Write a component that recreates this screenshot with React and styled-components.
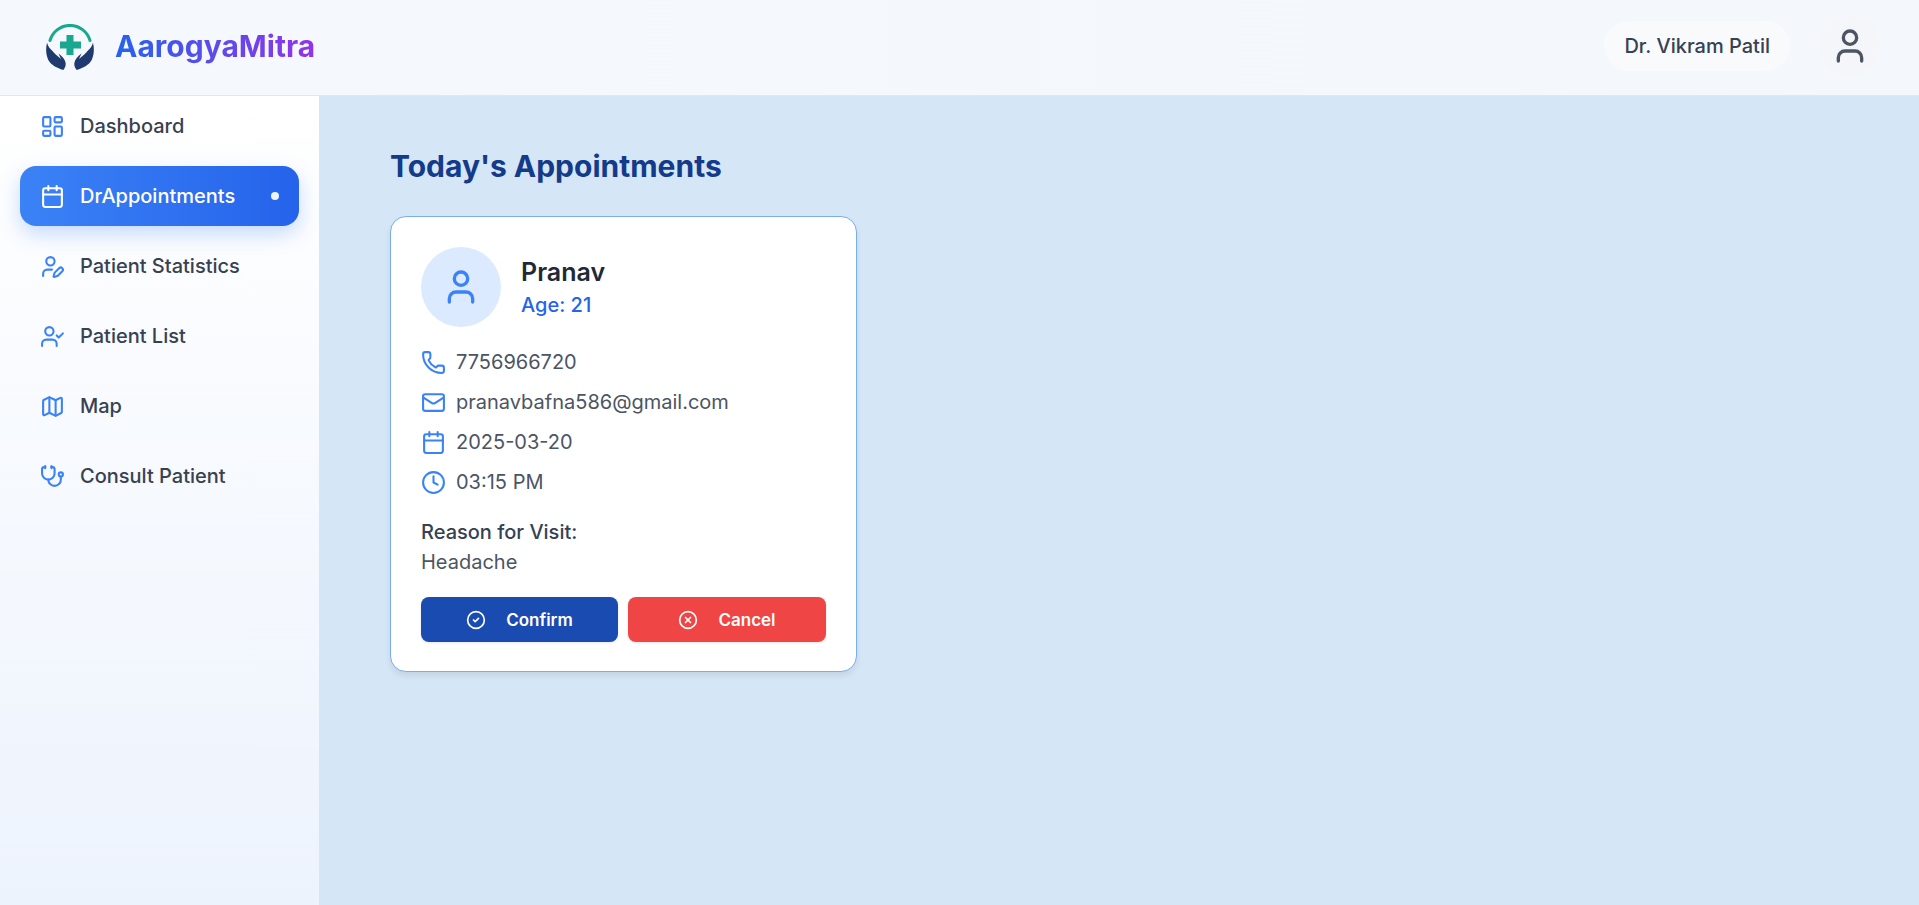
import React from "react";
import styled, { createGlobalStyle } from "styled-components";
import { LayoutDashboard, Calendar, UserPen, UserCheck, Map as MapIcon, Stethoscope, User, Phone, Mail, Clock, CircleCheck, CircleX } from "lucide-react";

const Global = createGlobalStyle`
  * { box-sizing: border-box; }
  html, body { margin: 0; height: 100%; }
  body { font-family: Inter, "Liberation Sans", sans-serif; background: #d5e6f6; }
`;
const Page = styled.div`display:flex;flex-direction:column;height:905px;overflow:hidden;`;
const Header = styled.header`
  height: 96px; flex: none; display:flex; align-items:center; justify-content:space-between;
  padding: 0 39px 3px 46px; background: linear-gradient(90deg,#f5f8fd,#f4f7fc); border-bottom: 1px solid #e1e7f0;
`;
const Brand = styled.div`display:flex;align-items:center;gap:21px;`;
const LogoMark = styled.svg`width:48px;height:47px;margin-top:3px;flex:none;`;
const BrandName = styled.span`
  font-size: 30px; font-weight: 700; line-height: 36px;
  background: linear-gradient(90deg,#2563eb,#9333ea); -webkit-background-clip:text; background-clip:text; color:transparent;
`;
const Profile = styled.div`display:flex;align-items:center;gap:30px;`;
const DoctorName = styled.div`
  height: 50px; padding: 0 20px; border-radius: 25px; background:#f9fafc; display:flex; align-items:center;
  font-size: 20px; font-weight: 500; color:#374151;
`;
const ProfileButton = styled.div`
  width: 60px; height: 60px; border-radius: 50%; background:#f5f6f9; display:flex; align-items:center; justify-content:center; color:#4b5563;
`;
const Body = styled.div`flex:1;display:flex;min-height:0;`;
const Sidebar = styled.aside`
  width: 319px; flex:none; padding: 0 20px; display:flex; flex-direction:column; gap:10px;
  background: linear-gradient(180deg,#ffffff,#edf3fd);
`;
const NavItem = styled.div`
  height: 60px; display:flex; align-items:center; gap:15px; padding: 0 20px; border-radius: 16px;
  font-size: 20px; font-weight: 500;
  color: ${p => p.$active ? "#fff" : "#374151"};
  background: ${p => p.$active ? "linear-gradient(90deg,#3b82f6,#2563eb)" : "transparent"};
  box-shadow: ${p => p.$active ? "0 8px 20px rgba(59,130,246,.28)" : "none"};
  svg { color: ${p => p.$active ? "#fff" : "#3b82f6"}; flex:none; }
`;
const Dot = styled.span`width:8px;height:8px;border-radius:50%;background:#eef4ff;margin-left:auto;`;
const Main = styled.main`flex:1;padding:52px 71px;background:#d5e6f6;`;
const Title = styled.h1`margin:0 0 32px;font-size:30px;line-height:36px;font-weight:700;color:#143a8a;`;
const Card = styled.section`
  width: 467px; height: 456px; padding: 30px; background:#fff; border:1px solid #76aeee; border-radius:16px;
  box-shadow: 0 4px 6px rgba(0,0,0,.08);
`;
const Person = styled.div`display:flex;align-items:center;gap:20px;margin-bottom:20px;`;
const Avatar = styled.div`width:80px;height:80px;border-radius:50%;background:#dbeafe;display:flex;align-items:center;justify-content:center;color:#3b82f6;`;
const PersonText = styled.div`display:flex;flex-direction:column;gap:3px;`;
const Name = styled.div`font-size:25px;line-height:32px;font-weight:600;color:#1f2937;`;
const Age = styled.div`font-size:20px;line-height:28px;font-weight:500;color:#2563eb;`;
const Details = styled.div`display:flex;flex-direction:column;gap:10px;`;
const Detail = styled.div`
  display:flex;align-items:center;gap:10px;height:30px;font-size:20px;color:#4b5563;
  svg { color:#3b82f6; flex:none; }
`;
const Reason = styled.div`margin-top:20px;`;
const ReasonLabel = styled.div`font-size:20px;line-height:30px;font-weight:500;color:#374151;`;
const ReasonText = styled.div`font-size:20px;line-height:30px;color:#4b5563;`;
const Actions = styled.div`display:grid;grid-template-columns:197px 198px;gap:10px;margin-top:20px;`;
const ActionButton = styled.button`
  height:45px;border:0;border-radius:8px;display:flex;align-items:center;justify-content:center;gap:20px;
  font-family:inherit;font-size:17px;font-weight:600;color:#fff;background:${p => p.$bg};
  box-shadow:0 1px 3px rgba(0,0,0,.1);padding:0;
`;

const hand = "M1 18.7C-.5 25 0 31 2.3 36 5 41 11 44 17.3 46 19.5 43 20 41 19.5 38.5 19 35.5 16.5 32.5 12.5 29.5L15 35C11.5 32 8 29 6.5 27 4 25 2 22 1 18.7Z";
const Logo = () => (
  <LogoMark viewBox="0 0 48 47" aria-hidden="true">
    <path d="M4 16.5A20.8 20.8 0 0 1 44 16.5" fill="none" stroke="#17a88f" strokeWidth="3" strokeLinecap="round"/>
    <path d="M20.5 11h7v6.5H35v7h-7.5V31h-7v-6.5H14v-7h6.5z" fill="#17a88f"/>
    <path d={hand} fill="#1e3a6e"/>
    <path d={hand} fill="#1e3a6e" transform="matrix(-1 0 0 1 48 0)"/>
  </LogoMark>
);

const items = [
  ["Dashboard", LayoutDashboard],
  ["DrAppointments", Calendar, true],
  ["Patient Statistics", UserPen],
  ["Patient List", UserCheck],
  ["Map", MapIcon],
  ["Consult Patient", Stethoscope],
];

export default function App() {
  return (
    <Page>
      <Global />
      <Header>
        <Brand><Logo /><BrandName>AarogyaMitra</BrandName></Brand>
        <Profile>
          <DoctorName>Dr. Vikram Patil</DoctorName>
          <ProfileButton><User size={40} strokeWidth={2} /></ProfileButton>
        </Profile>
      </Header>
      <Body>
        <Sidebar>
          {items.map(([label, Icon, active]) => (
            <NavItem key={label} $active={active}>
              <Icon size={25} strokeWidth={2} />
              {label}
              {active && <Dot />}
            </NavItem>
          ))}
        </Sidebar>
        <Main>
          <Title>Today's Appointments</Title>
          <Card>
            <Person>
              <Avatar><User size={40} strokeWidth={2} /></Avatar>
              <PersonText><Name>Pranav</Name><Age>Age: 21</Age></PersonText>
            </Person>
            <Details>
              <Detail><Phone size={25} />7756966720</Detail>
              <Detail><Mail size={25} />pranavbafna586@gmail.com</Detail>
              <Detail><Calendar size={25} />2025-03-20</Detail>
              <Detail><Clock size={25} />03:15 PM</Detail>
            </Details>
            <Reason>
              <ReasonLabel>Reason for Visit:</ReasonLabel>
              <ReasonText>Headache</ReasonText>
            </Reason>
            <Actions>
              <ActionButton $bg="#1a4bb0"><CircleCheck size={20} />Confirm</ActionButton>
              <ActionButton $bg="#f04545"><CircleX size={20} />Cancel</ActionButton>
            </Actions>
          </Card>
        </Main>
      </Body>
    </Page>
  );
}
